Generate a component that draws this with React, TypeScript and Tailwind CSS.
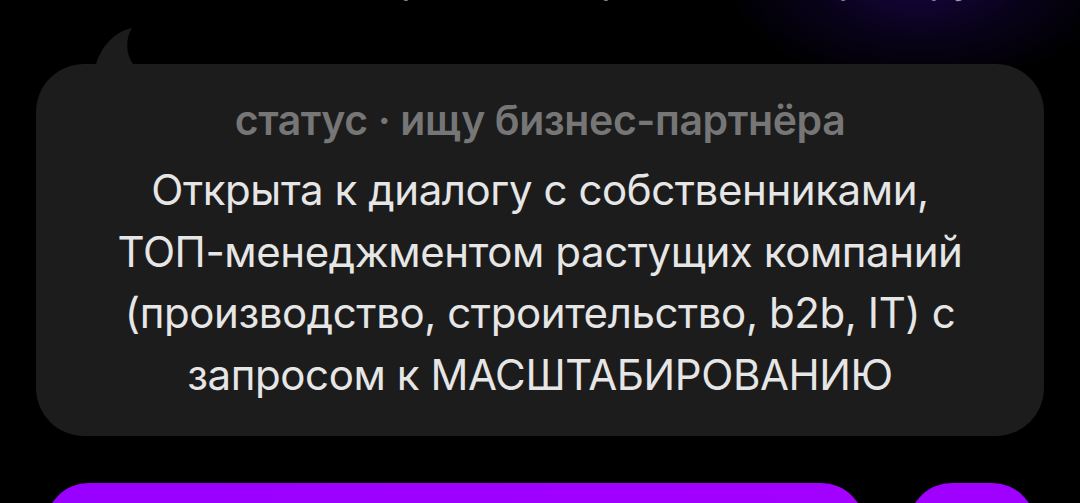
export default function App() {
  return (
    <div
      className="relative h-[503px] w-[1080px] overflow-hidden bg-black"
      style={{ fontFamily: "Inter, 'Noto Sans', sans-serif" }}
    >
      {/* purple glow top right */}
      <div className="pointer-events-none absolute -top-[140px] left-[720px] h-[230px] w-[400px] rounded-full bg-[radial-gradient(ellipse_at_center,_rgba(34,8,95,0.7)_0%,_rgba(20,5,60,0.4)_40%,_rgba(0,0,0,0)_70%)]" />

      {/* clipped previous line */}
      <div className="relative h-[27px] overflow-hidden">
        <p className="-mt-[44px] text-center text-[40px] leading-[46px] text-[#9a9a9a]">
          и с опытом в стратегии и развитии партнёру,
        </p>
      </div>

      {/* bubble tail */}
      <div className="relative ml-[96px] h-[37px] w-[40px]">
        <svg width="40" height="37" viewBox="0 0 40 37" className="block">
          <path d="M0 37 C 6 18, 20 4, 36 1 C 30 10, 29 26, 37 37 Z" fill="#1c1c1c" />
        </svg>
      </div>

      {/* bubble */}
      <div className="relative mx-[36px] flex h-[372px] flex-col items-center rounded-[48px] bg-[#1c1c1c] pt-[31px] text-center">
        <p className="text-[41px] font-semibold leading-[50px] tracking-[-0.01em] text-[#767676]">
          статус · ищу бизнес-партнёра
        </p>
        <p className="mt-[14px] text-[42px] leading-[61.5px] tracking-[-0.01em] text-[#e6e6e6]">
          Открыта к диалогу с собственниками,
          <br />
          ТОП-менеджментом растущих компаний
          <br />
          (производство, строительство, b2b, IT) с
          <br />
          запросом к МАСШТАБИРОВАНИЮ
        </p>
      </div>

      {/* buttons */}
      <div className="mt-[47px] flex gap-[43px] pl-[45px]">
        <div className="h-[90px] w-[820px] rounded-[44px] bg-[linear-gradient(90deg,#9800ff,#a300ff)]" />
        <div className="h-[90px] w-[128px] rounded-[44px] bg-[#a000ff]" />
      </div>
    </div>
  );
}
